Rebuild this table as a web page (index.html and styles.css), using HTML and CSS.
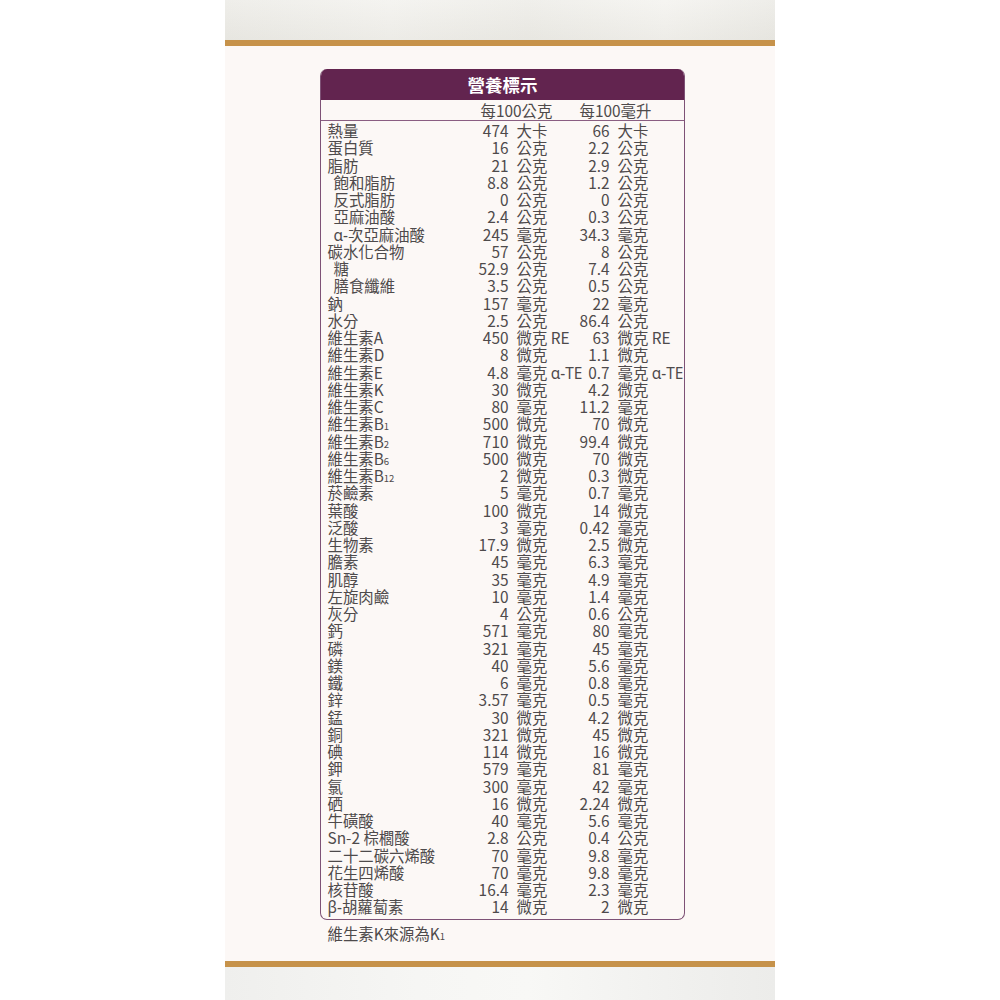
FILE: index.html
```html
<!DOCTYPE html>
<html lang="zh-Hant">
<head>
<meta charset="utf-8">
<title>營養標示</title>
<link rel="stylesheet" href="styles.css">
</head>
<body>
<div class="strip">
  <div class="texture texture-top"></div>
  <div class="gold"></div>
  <div class="content">
    <div class="panel">
      <div class="panel-title">營養標示</div>
      <div class="grid subhead">
        <span class="sh1">每100公克</span>
        <span class="sh2">每100毫升</span>
      </div>
      <div class="body">
        <div class="grid row"><span class="lb">熱量</span><span class="n">474</span><span class="u">大卡</span><span class="n">66</span><span class="u">大卡</span></div>
        <div class="grid row"><span class="lb">蛋白質</span><span class="n">16</span><span class="u">公克</span><span class="n">2.2</span><span class="u">公克</span></div>
        <div class="grid row"><span class="lb">脂肪</span><span class="n">21</span><span class="u">公克</span><span class="n">2.9</span><span class="u">公克</span></div>
        <div class="grid row"><span class="lb ind">飽和脂肪</span><span class="n">8.8</span><span class="u">公克</span><span class="n">1.2</span><span class="u">公克</span></div>
        <div class="grid row"><span class="lb ind">反式脂肪</span><span class="n">0</span><span class="u">公克</span><span class="n">0</span><span class="u">公克</span></div>
        <div class="grid row"><span class="lb ind">亞麻油酸</span><span class="n">2.4</span><span class="u">公克</span><span class="n">0.3</span><span class="u">公克</span></div>
        <div class="grid row"><span class="lb ind"><span class="lat">α-</span>次亞麻油酸</span><span class="n">245</span><span class="u">毫克</span><span class="n">34.3</span><span class="u">毫克</span></div>
        <div class="grid row"><span class="lb">碳水化合物</span><span class="n">57</span><span class="u">公克</span><span class="n">8</span><span class="u">公克</span></div>
        <div class="grid row"><span class="lb ind">糖</span><span class="n">52.9</span><span class="u">公克</span><span class="n">7.4</span><span class="u">公克</span></div>
        <div class="grid row"><span class="lb ind">膳食纖維</span><span class="n">3.5</span><span class="u">公克</span><span class="n">0.5</span><span class="u">公克</span></div>
        <div class="grid row"><span class="lb">鈉</span><span class="n">157</span><span class="u">毫克</span><span class="n">22</span><span class="u">毫克</span></div>
        <div class="grid row"><span class="lb">水分</span><span class="n">2.5</span><span class="u">公克</span><span class="n">86.4</span><span class="u">公克</span></div>
        <div class="grid row"><span class="lb">維生素A</span><span class="n">450</span><span class="u">微克 RE</span><span class="n">63</span><span class="u">微克 RE</span></div>
        <div class="grid row"><span class="lb">維生素D</span><span class="n">8</span><span class="u">微克</span><span class="n">1.1</span><span class="u">微克</span></div>
        <div class="grid row"><span class="lb">維生素E</span><span class="n">4.8</span><span class="u">毫克 <span class="lat">α-TE</span></span><span class="n">0.7</span><span class="u">毫克 <span class="lat">α-TE</span></span></div>
        <div class="grid row"><span class="lb">維生素K</span><span class="n">30</span><span class="u">微克</span><span class="n">4.2</span><span class="u">微克</span></div>
        <div class="grid row"><span class="lb">維生素C</span><span class="n">80</span><span class="u">毫克</span><span class="n">11.2</span><span class="u">毫克</span></div>
        <div class="grid row"><span class="lb">維生素B<span class="sub">1</span></span><span class="n">500</span><span class="u">微克</span><span class="n">70</span><span class="u">微克</span></div>
        <div class="grid row"><span class="lb">維生素B<span class="sub">2</span></span><span class="n">710</span><span class="u">微克</span><span class="n">99.4</span><span class="u">微克</span></div>
        <div class="grid row"><span class="lb">維生素B<span class="sub">6</span></span><span class="n">500</span><span class="u">微克</span><span class="n">70</span><span class="u">微克</span></div>
        <div class="grid row"><span class="lb">維生素B<span class="sub">12</span></span><span class="n">2</span><span class="u">微克</span><span class="n">0.3</span><span class="u">微克</span></div>
        <div class="grid row"><span class="lb">菸鹼素</span><span class="n">5</span><span class="u">毫克</span><span class="n">0.7</span><span class="u">毫克</span></div>
        <div class="grid row"><span class="lb">葉酸</span><span class="n">100</span><span class="u">微克</span><span class="n">14</span><span class="u">微克</span></div>
        <div class="grid row"><span class="lb">泛酸</span><span class="n">3</span><span class="u">毫克</span><span class="n">0.42</span><span class="u">毫克</span></div>
        <div class="grid row"><span class="lb">生物素</span><span class="n">17.9</span><span class="u">微克</span><span class="n">2.5</span><span class="u">微克</span></div>
        <div class="grid row"><span class="lb">膽素</span><span class="n">45</span><span class="u">毫克</span><span class="n">6.3</span><span class="u">毫克</span></div>
        <div class="grid row"><span class="lb">肌醇</span><span class="n">35</span><span class="u">毫克</span><span class="n">4.9</span><span class="u">毫克</span></div>
        <div class="grid row"><span class="lb">左旋肉鹼</span><span class="n">10</span><span class="u">毫克</span><span class="n">1.4</span><span class="u">毫克</span></div>
        <div class="grid row"><span class="lb">灰分</span><span class="n">4</span><span class="u">公克</span><span class="n">0.6</span><span class="u">公克</span></div>
        <div class="grid row"><span class="lb">鈣</span><span class="n">571</span><span class="u">毫克</span><span class="n">80</span><span class="u">毫克</span></div>
        <div class="grid row"><span class="lb">磷</span><span class="n">321</span><span class="u">毫克</span><span class="n">45</span><span class="u">毫克</span></div>
        <div class="grid row"><span class="lb">鎂</span><span class="n">40</span><span class="u">毫克</span><span class="n">5.6</span><span class="u">毫克</span></div>
        <div class="grid row"><span class="lb">鐵</span><span class="n">6</span><span class="u">毫克</span><span class="n">0.8</span><span class="u">毫克</span></div>
        <div class="grid row"><span class="lb">鋅</span><span class="n">3.57</span><span class="u">毫克</span><span class="n">0.5</span><span class="u">毫克</span></div>
        <div class="grid row"><span class="lb">錳</span><span class="n">30</span><span class="u">微克</span><span class="n">4.2</span><span class="u">微克</span></div>
        <div class="grid row"><span class="lb">銅</span><span class="n">321</span><span class="u">微克</span><span class="n">45</span><span class="u">微克</span></div>
        <div class="grid row"><span class="lb">碘</span><span class="n">114</span><span class="u">微克</span><span class="n">16</span><span class="u">微克</span></div>
        <div class="grid row"><span class="lb">鉀</span><span class="n">579</span><span class="u">毫克</span><span class="n">81</span><span class="u">毫克</span></div>
        <div class="grid row"><span class="lb">氯</span><span class="n">300</span><span class="u">毫克</span><span class="n">42</span><span class="u">毫克</span></div>
        <div class="grid row"><span class="lb">硒</span><span class="n">16</span><span class="u">微克</span><span class="n">2.24</span><span class="u">微克</span></div>
        <div class="grid row"><span class="lb">牛磺酸</span><span class="n">40</span><span class="u">毫克</span><span class="n">5.6</span><span class="u">毫克</span></div>
        <div class="grid row"><span class="lb">Sn-2 棕櫚酸</span><span class="n">2.8</span><span class="u">公克</span><span class="n">0.4</span><span class="u">公克</span></div>
        <div class="grid row"><span class="lb">二十二碳六烯酸</span><span class="n">70</span><span class="u">毫克</span><span class="n">9.8</span><span class="u">毫克</span></div>
        <div class="grid row"><span class="lb">花生四烯酸</span><span class="n">70</span><span class="u">毫克</span><span class="n">9.8</span><span class="u">毫克</span></div>
        <div class="grid row"><span class="lb">核苷酸</span><span class="n">16.4</span><span class="u">毫克</span><span class="n">2.3</span><span class="u">毫克</span></div>
        <div class="grid row"><span class="lb"><span class="lat">β-</span>胡蘿蔔素</span><span class="n">14</span><span class="u">微克</span><span class="n">2</span><span class="u">微克</span></div>
      </div>
    </div>
    <p class="note">維生素K來源為K<span class="sub">1</span></p>
  </div>
  <div class="gold"></div>
  <div class="texture texture-bottom"></div>
</div>
</body>
</html>
```

FILE: styles.css
```css
html, body {
  margin: 0;
  padding: 0;
  background: #ffffff;
}

body {
  font-family: "Noto Sans CJK TC", "Noto Sans", sans-serif;
  color: #4e4a4b;
}

.strip {
  width: 550px;
  margin-left: 225px;
  display: flex;
  flex-direction: column;
}

.texture {
  height: 40px;
}

.texture-top {
  background:
    linear-gradient(180deg, rgba(255,255,255,0.2), rgba(215,213,205,0.2)),
    linear-gradient(90deg, #ebeae5 0%, #f2f1ed 30%, #ecebe6 55%, #f3f2ee 80%, #eae9e4 100%);
}

.texture-bottom {
  height: 33px;
  background:
    linear-gradient(90deg, #efefed 0%, #f6f6f4 35%, #f8f8f6 55%, #f1f1ef 80%, #ececea 100%);
}

.gold {
  height: 6px;
  background: #c6924a;
}

.content {
  background: #fcf8f6;
  padding: 23px 0 0 95px;
  height: 915px;
  box-sizing: border-box;
}

.panel {
  width: 365px;
  box-sizing: border-box;
  border: 1.5px solid #7e5276;
  border-top: none;
  border-radius: 7px;
  overflow: hidden;
}

.panel-title {
  height: 31px;
  background: #62244f;
  color: #ffffff;
  font-weight: 700;
  font-size: 17.5px;
  line-height: 31px;
  text-align: center;
  margin: 0 -1.5px;
}

.grid {
  display: grid;
  grid-template-columns: 142px 39px 61px 40px 1fr;
  padding-left: 6.5px;
  font-size: 15.4px;
  line-height: 17.25px;
  height: 17.25px;
  white-space: nowrap;
}

.subhead {
  height: 20px;
  line-height: 21px;
  border-bottom: 1.5px solid #8a5e82;
}

.sh1 {
  grid-column: 2 / 4;
  padding-left: 11px;
}

.sh2 {
  grid-column: 4 / 6;
  padding-left: 10px;
}

.body {
  padding: 1px 0 3.5px;
}

.n {
  text-align: right;
}

.u {
  padding-left: 8px;
}

.ind {
  padding-left: 6px;
}

.lat {
  font-family: "Noto Sans", sans-serif;
}

.sub {
  font-size: 9.5px;
  line-height: 0;
}

.note {
  margin: 5px 0 0 7.5px;
  font-size: 15.4px;
  line-height: 17.25px;
}
```
